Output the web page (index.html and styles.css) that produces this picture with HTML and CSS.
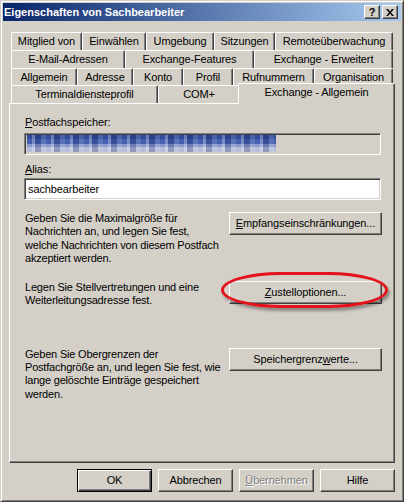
FILE: index.html
```html
<!DOCTYPE html>
<html lang="de">
<head>
<meta charset="utf-8">
<title>Eigenschaften von Sachbearbeiter</title>
<link rel="stylesheet" href="styles.css">
</head>
<body>
<div class="window">
  <div class="titlebar">
    <span class="title">Eigenschaften von Sachbearbeiter</span>
    <div class="capbtns">
      <span class="capbtn help">?</span>
      <span class="capbtn"><svg width="8" height="7" viewBox="0 0 8 7"><path d="M0 0h2l2 2.5 2-2.5h2l-3 3.5 3 3.5h-2l-2-2.5-2 2.5h-2l3-3.5z" fill="#000"/></svg></span>
    </div>
  </div>
  <div class="client">
    <div class="tabs">
      <div class="tabrow r1">
        <div class="tab">Mitglied von</div>
        <div class="tab">Einwählen</div>
        <div class="tab">Umgebung</div>
        <div class="tab">Sitzungen</div>
        <div class="tab">Remoteüberwachung</div>
      </div>
      <div class="tabrow r2">
        <div class="tab">E-Mail-Adressen</div>
        <div class="tab">Exchange-Features</div>
        <div class="tab">Exchange - Erweitert</div>
      </div>
      <div class="tabrow r3">
        <div class="tab">Allgemein</div>
        <div class="tab">Adresse</div>
        <div class="tab">Konto</div>
        <div class="tab">Profil</div>
        <div class="tab">Rufnummern</div>
        <div class="tab">Organisation</div>
      </div>
      <div class="tabrow r4">
        <div class="tab">Terminaldiensteprofil</div>
        <div class="tab">COM+</div>
        <div class="tab sel">Exchange - Allgemein</div>
      </div>
    </div>
    <div class="panel">
      <div class="label first"><u>P</u>ostfachspeicher:</div>
      <div class="field disabled"><span class="blur"></span></div>
      <div class="label alias"><u>A</u>lias:</div>
      <div class="field edit">sachbearbeiter</div>
      <div class="row row1">
        <p class="desc">Geben Sie die Maximalgröße für<br>Nachrichten an, und legen Sie fest,<br>welche Nachrichten von diesem Postfach<br>akzeptiert werden.</p>
        <div class="btn wide"><span><u>E</u>mpfangseinschränkungen...</span></div>
      </div>
      <div class="row row2">
        <p class="desc">Legen Sie Stellvertretungen und eine<br>Weiterleitungsadresse fest.</p>
        <div class="btnwrap">
          <div class="btn wide"><span><u>Z</u>ustelloptionen...</span></div>
          <div class="highlight"></div>
        </div>
      </div>
      <div class="row row3">
        <p class="desc">Geben Sie Obergrenzen der<br>Postfachgröße an, und legen Sie fest, wie<br>lange gelöschte Einträge gespeichert<br>werden.</p>
        <div class="btn wide"><span>Speichergrenz<u>w</u>erte...</span></div>
      </div>
    </div>
    <div class="footer">
      <div class="btn default"><span>OK</span></div>
      <div class="btn"><span>Abbrechen</span></div>
      <div class="btn disabled"><span><u>Ü</u>bernehmen</span></div>
      <div class="btn"><span>Hilfe</span></div>
    </div>
  </div>
</div>
</body>
</html>
```

FILE: styles.css
```css
* { box-sizing: border-box; }
html, body { margin: 0; padding: 0; background: #d4d0c8; }
body {
  font-family: "Liberation Sans", Arial, sans-serif;
  font-size: 11px;
  letter-spacing: -0.12px;
  color: #000;
}
u { text-decoration: underline; text-underline-offset: 1px; }

.window {
  width: 404px;
  height: 502px;
  border: 1px solid;
  border-color: #d4d0c8 #404040 #404040 #d4d0c8;
  box-shadow: inset 1px 1px #fff, inset -1px -1px #808080;
  padding: 2px;
  background: #d4d0c8;
  display: flex;
  flex-direction: column;
}

.titlebar {
  height: 18px;
  flex-shrink: 0;
  background: linear-gradient(to right, #0a246a, #a6caf0);
  display: flex;
  align-items: center;
  justify-content: space-between;
  padding: 0 3px 0 1px;
}
.title {
  color: #fff;
  font-weight: bold;
  font-size: 11px;
  letter-spacing: 0;
  line-height: 18px;
}
.capbtns { display: flex; gap: 2px; }
.capbtn {
  width: 16px;
  height: 14px;
  background: #d4d0c8;
  border: 1px solid;
  border-color: #fff #404040 #404040 #fff;
  box-shadow: inset -1px -1px #808080;
  display: flex;
  align-items: center;
  justify-content: center;
}
.capbtn.help {
  font-weight: bold;
  font-size: 11px;
  line-height: 12px;
}

.client {
  flex: 1;
  padding: 11px 6px 0 6px;
  display: flex;
  flex-direction: column;
}

.tabs {
  position: relative;
  z-index: 1;
  padding: 0 2px;
}
.tabrow { display: grid; height: 18px; }
.tabrow.r3 { height: 17px; }
.r1 { grid-template-columns: 71px 64px 68px 61px 118px; }
.r2 { grid-template-columns: 114px 129px 139px; }
.r3 { grid-template-columns: 66px 56px 50px 50px 81px 79px; }
.r4 { grid-template-columns: 147px 82px 153px; }

.tab {
  background: #d4d0c8;
  border-top: 1px solid #fff;
  border-left: 1px solid #fff;
  border-right: 1px solid #404040;
  box-shadow: inset -1px 0 #808080;
  border-radius: 2px 2px 0 0;
  text-align: center;
  white-space: nowrap;
  padding-top: 2px;
  line-height: 13px;
}
.tab.sel {
  margin: -2px -2px -1px -2px;
  position: relative;
  z-index: 2;
}

.panel {
  position: relative;
  height: 360px;
  border: 1px solid;
  border-color: #fff #404040 #404040 #fff;
  box-shadow: inset -1px -1px #808080;
  padding: 0 12px 0 14px;
}

.label { line-height: 13px; padding-left: 1px; }
.label.first { margin-top: 12px; }
.label.alias { margin-top: 8px; }

.field {
  height: 22px;
  margin-right: 1px;
  border: 1px solid;
  border-color: #808080 #fff #fff #808080;
  box-shadow: inset 1px 1px #404040, inset -1px -1px #d4d0c8;
}
.field.disabled {
  margin-top: 4px;
  background: #d4d0c8;
  padding: 1px 0 0 2px;
}
.blur {
  display: block;
  width: 249px;
  height: 17px;
  background:
    repeating-linear-gradient(90deg, rgba(255,255,255,0) 0 5px, rgba(255,255,255,0.28) 5px 8px, rgba(10,20,80,0.22) 8px 14px, rgba(255,255,255,0.12) 14px 19px),
    linear-gradient(#2f4c9e 0 4px, #4660ad 4px 9px, #8898cc 9px 12px, #b6bedc 12px 17px);
}
.field.edit {
  margin-top: 2px;
  background: #fff;
  padding: 0 0 0 3px;
  line-height: 20px;
}

.row {
  display: flex;
  justify-content: space-between;
  align-items: flex-start;
}
.row1 { margin-top: 12px; }
.row2 { margin-top: 16px; }
.row3 { margin-top: 40px; }
.desc {
  margin: 0;
  padding-left: 1px;
  line-height: 13.3px;
  letter-spacing: -0.2px;
}

.btn {
  width: 75px;
  height: 23px;
  background: #d4d0c8;
  border: 1px solid;
  border-color: #fff #404040 #404040 #fff;
  box-shadow: inset -1px -1px #808080;
  display: flex;
  align-items: center;
  justify-content: center;
  padding-bottom: 1px;
  white-space: nowrap;
}
.btn.wide { width: 153px; }
.btn.default {
  border-color: #000;
  box-shadow: inset 1px 1px #fff, inset -1px -1px #404040, inset -2px -2px #808080;
}
.btn.disabled {
  color: #808080;
  text-shadow: 1px 1px #fff;
}

.btnwrap { position: relative; }
.highlight {
  position: absolute;
  left: -8px;
  top: -9px;
  width: 167px;
  height: 36px;
  border: 3px solid #e3121b;
  border-radius: 60px / 18px;
  box-shadow: 2px 3px 3px rgba(0,0,0,0.35);
  pointer-events: none;
}

.footer {
  margin-top: 6px;
  display: flex;
  justify-content: flex-end;
  gap: 6px;
}
```
